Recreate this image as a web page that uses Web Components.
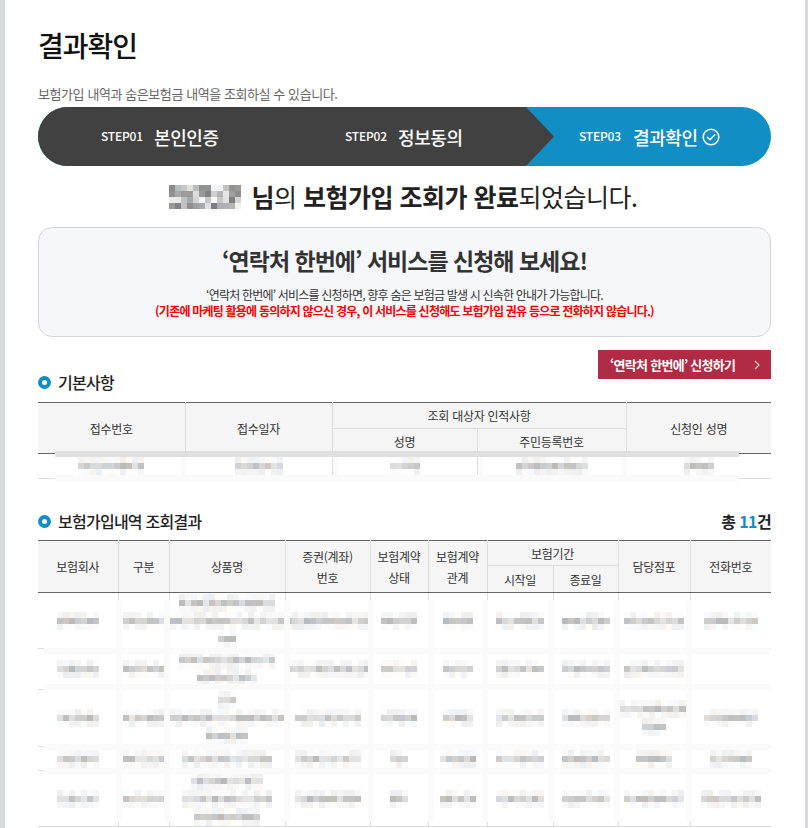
<!DOCTYPE html>
<html lang="ko">
<head>
<meta charset="utf-8">
<title>결과확인</title>
<style>
  html, body { margin: 0; height: 828px; overflow: hidden; background: #d5d9de; }
  body { font-family: "Noto Sans CJK KR", "Noto Sans", sans-serif; color: #222; }
</style>
</head>
<body>
<result-page></result-page>
<script>
// small seeded random, so the mosaic comes out the same each time
function seeded (seed) {
    let s = seed * 9301 + 49297;
    return () => {
        s = (s * 9301 + 49297) % 233280;
        return s / 233280;
    };
}

class MosaicBlock extends HTMLElement {
    connectedCallback () {
        const cols = +this.getAttribute('cols') || 6;
        const rows = +this.getAttribute('rows') || 3;
        const seed = +this.getAttribute('seed') || 1;
        const strong = this.hasAttribute('strong');
        const rnd = seeded(seed);
        let tiles = '';
        for (let y = 0; y < rows; y++) {
            for (let x = 0; x < cols; x++) {
                const mid = y === Math.floor(rows / 2);
                let v = mid ? 185 + rnd() * 45 : 238 + rnd() * 17;
                if (strong) v = 125 + rnd() * 125;
                const t = rnd() * 8 - 4;
                tiles += `<i style="background:rgb(${Math.round(v + t)},${Math.round(v)},${Math.round(Math.min(255, v - t))})"></i>`;
            }
        }
        this.attachShadow({ mode: 'open' }).innerHTML = `
            <style>
                :host { display: grid; grid-template-columns: repeat(${cols}, 6px); grid-auto-rows: 6px; width: ${cols * 6}px; margin: 0 auto; }
            </style>
            ${tiles}`;
    }
}
customElements.define('mosaic-block', MosaicBlock);

class StepBar extends HTMLElement {
    constructor () {
        super();
        this.attachShadow({ mode: 'open' }).innerHTML = `
            <style>
                :host { display: block; height: 59px; border-radius: 30px; overflow: hidden; background: #118fc5; color: #fff; }
                .wrap { display: flex; height: 100%; }
                .done {
                    width: 516px; padding-left: 63px; box-sizing: border-box;
                    display: grid; grid-template-columns: 245px 208px; align-items: center;
                    background-color: #414141;
                    background-image: radial-gradient(circle, #4b4b4b 0.5px, transparent 0.7px);
                    background-size: 6px 6px;
                    clip-path: polygon(0 0, 488px 0, 516px 50%, 488px 100%, 0 100%);
                }
                .now { flex: 1; padding-left: 25px; display: flex; align-items: center; }
                .step { display: flex; align-items: center; white-space: nowrap; }
                .step + .step { margin-left: -1px; }
                b { font-size: 12px; font-weight: 500; width: 53px; letter-spacing: -0.2px; padding-bottom: 3px; }
                span { font-size: 18px; font-weight: 500; letter-spacing: -0.4px; }
                svg { margin-left: 4px; }
            </style>
            <div class="wrap">
                <div class="done">
                    <div class="step"><b>STEP01</b><span>본인인증</span></div>
                    <div class="step"><b>STEP02</b><span>정보동의</span></div>
                </div>
                <div class="now">
                    <div class="step"><b style="width:54px">STEP03</b><span>결과확인</span>
                        <svg width="18" height="18" viewBox="0 0 18 18" fill="none" stroke="#fff" stroke-width="1.5">
                            <circle cx="9" cy="9" r="7.8"/>
                            <path d="M5.4 9.2l2.6 2.6 4.8-5" stroke-linecap="round" stroke-linejoin="round"/>
                        </svg>
                    </div>
                </div>
            </div>`;
    }
}
customElements.define('step-bar', StepBar);

class ServiceBox extends HTMLElement {
    constructor () {
        super();
        this.attachShadow({ mode: 'open' }).innerHTML = `
            <style>
                :host {
                    display: block; height: 110px; box-sizing: border-box; text-align: center;
                    border: 1px solid #d4d4d4; border-radius: 14px; background: #f6f7fb;
                    padding-top: 13px;
                }
                h2 { margin: 0; font-size: 23px; line-height: 38px; font-weight: 700; color: #333; letter-spacing: -1px; }
                p { margin: 0; font-size: 12px; line-height: 16px; letter-spacing: -0.8px; color: #333; }
                h2 + p { margin-top: 8px; }
                .warn { color: #f00; font-weight: 700; letter-spacing: -0.78px; }
            </style>
            <h2>‘연락처 한번에’ 서비스를 신청해 보세요!</h2>
            <p>‘연락처 한번에’ 서비스를 신청하면, 향후 숨은 보험금 발생 시 신속한 안내가 가능합니다.</p>
            <p class="warn">(기존에 마케팅 활용에 동의하지 않으신 경우, 이 서비스를 신청해도 보험가입 권유 등으로 전화하지 않습니다.)</p>`;
    }
}
customElements.define('service-box', ServiceBox);

class SectionHead extends HTMLElement {
    constructor () {
        super();
        this.attachShadow({ mode: 'open' }).innerHTML = `
            <style>
                :host { display: flex; align-items: center; font-size: 16px; line-height: 20px; font-weight: 500; color: #222; letter-spacing: -0.75px; }
                i { width: 13px; height: 13px; box-sizing: border-box; border: 4px solid #118fc5; border-radius: 50%; margin-right: 7px; }
            </style>
            <i></i><slot></slot>`;
    }
}
customElements.define('section-head', SectionHead);

const tableCss = `
    :host { display: block; position: relative; overflow: hidden; }
    table { width: 733px; border-collapse: collapse; table-layout: fixed; font-size: 12px; color: #333; letter-spacing: -0.3px; }
    thead th { background: #f5f5f5; font-weight: 400; line-height: 21px; border: 1px solid #dcdcdc; padding: 0; }
    thead tr:first-child th { border-top-color: #666; }
    thead th[rowspan], thead tr:last-child th { border-bottom-color: #666; }
    thead th:first-child { border-left: 0; }
    thead th:last-child { border-right: 0; }
    td { padding: 0; border-bottom: 1px solid #dedede; border-left: 1px solid #dedede; vertical-align: middle; }
    td:first-child { border-left: 0; }
    .bar { position: absolute; background: #fafafa; }
`;

function bars (list) {
    return list.map(([x, y, w, h, c]) =>
        `<div class="bar" style="left:${x}px;top:${y}px;width:${w}px;height:${h}px${c ? ';background:' + c : ''}"></div>`).join('');
}

class BasicTable extends HTMLElement {
    constructor () {
        super();
        const vals = [11, 8, 5, 12, 5];
        const cells = vals.map((c, i) => `<td><mosaic-block cols="${c}" seed="${i + 3}"></mosaic-block></td>`).join('');
        const cols = [147, 147, 145, 149, 145].map(w => `<col style="width:${w}px">`).join('');
        const xs = [143, 295, 440, 584]; // pale stripes over the column lines
        this.attachShadow({ mode: 'open' }).innerHTML = `
            <style>${tableCss}
                :host { height: 79px; }
                thead tr:first-child { height: 26px; }
                thead tr:last-child { height: 25px; }
                tbody tr { height: 25px; }
            </style>
            <table>
                <colgroup>${cols}</colgroup>
                <thead>
                    <tr><th rowspan="2">접수번호</th><th rowspan="2">접수일자</th><th colspan="2">조회 대상자 인적사항</th><th rowspan="2">신청인 성명</th></tr>
                    <tr><th>성명</th><th>주민등록번호</th></tr>
                </thead>
                <tbody><tr>${cells}</tr></tbody>
            </table>
            ${bars([[17, 49, 684, 6, '#e0e0e0'], [17, 73, 684, 6]])}
            ${bars(xs.map(x => [x, 55, 5, 18]))}`;
    }
}
customElements.define('basic-table', BasicTable);

class ResultTable extends HTMLElement {
    constructor () {
        super();
        // cells of mosaic per column, per row; an array is a cell with several lines
        const rows = [
            [56, [7, 7, [16, 19, 3], 14, 6, 5, 8, 8, 10, 9]],
            [41, [7, 7, [16, 10], 14, 6, 5, 8, 8, 10, 0]],
            [57, [7, 7, [3, 19, 7], 11, 6, 5, 8, 8, [12, 4], 9]],
            [24, [7, 7, 15, 11, 3, 6, 8, 8, 6, 7]],
            [56, [7, 7, [12, 15, 11], 11, 3, 6, 8, 8, 10, 10]],
        ];
        let seed = 20;
        const body = rows.map(([h, cells]) => `<tr style="height:${h}px">` + cells.map(c =>
            '<td>' + [].concat(c).map(n => n ? `<mosaic-block cols="${n}" seed="${seed++}"></mosaic-block>` : '').join('') + '</td>').join('') + '</tr>').join('');
        const cols = [80, 51, 116, 85, 58, 59, 66, 65, 72, 81].map(w => `<col style="width:${w}px">`).join('');
        const xs = [78, 126, 246, 330, 390, 444, 510, 576, 648];
        const ys = [108, 144, 204, 228];
        this.attachShadow({ mode: 'open' }).innerHTML = `
            <style>${tableCss}
                :host { height: 287px; }
                thead tr:first-child { height: 25px; }
                thead tr:last-child { height: 27px; }
            </style>
            <table>
                <colgroup>${cols}</colgroup>
                <thead>
                    <tr>
                        <th rowspan="2">보험회사</th><th rowspan="2">구분</th><th rowspan="2">상품명</th>
                        <th rowspan="2">증권(계좌)<br>번호</th><th rowspan="2">보험계약<br>상태</th><th rowspan="2">보험계약<br>관계</th>
                        <th colspan="2">보험기간</th><th rowspan="2">담당점포</th><th rowspan="2">전화번호</th>
                    </tr>
                    <tr><th>시작일</th><th>종료일</th></tr>
                </thead>
                <tbody>${body}</tbody>
            </table>
            ${bars(ys.map(y => [6, y, 726, 6]))}
            ${bars(xs.map(x => [x, 60, 6, 222]))}`;
    }
}
customElements.define('result-table', ResultTable);

class ResultPage extends HTMLElement {
    constructor () {
        super();
        this.attachShadow({ mode: 'open' }).innerHTML = `
            <style>
                :host { display: block; width: 800px; height: 828px; box-sizing: border-box; margin-left: 5px; padding: 0 34px 0 33px; background: #fff; overflow: hidden; }
                h1 { margin: 0; padding-top: 25px; font-size: 28px; line-height: 40px; font-weight: 500; color: #111; letter-spacing: -1px; }
                .lead { margin: 19px 0 0; font-size: 13px; line-height: 20px; color: #666; letter-spacing: -0.42px; }
                step-bar { margin-top: 3px; }
                .done-msg { margin: 14px 0 0; padding-right: 2px; height: 33px; display: flex; justify-content: center; align-items: center; font-size: 25px; line-height: 33px; font-weight: 400; color: #222; letter-spacing: -0.5px; white-space: pre; }
                .done-msg .name { flex: none; width: 72px; margin-right: 10px; }
                .done-msg b { font-weight: 700; }
                service-box { margin-top: 14px; }
                .basic-head { display: flex; justify-content: space-between; height: 52px; margin-top: 13px; }
                .basic-head section-head { align-self: flex-end; height: 20px; margin-bottom: 10px; }
                .apply {
                    width: 173px; height: 29px; box-sizing: border-box; padding: 0 11px 0 12px;
                    display: flex; align-items: center; justify-content: space-between;
                    background: #b12b45; color: #fff; font-size: 13px; font-weight: 700; letter-spacing: -0.72px;
                }
                .list-head { display: flex; justify-content: space-between; align-items: center; height: 20px; margin: 30px 0 9px; }
                .total { font-size: 16px; font-weight: 700; color: #222; letter-spacing: -0.6px; }
                .total em { font-style: normal; color: #118fc5; }
            </style>
            <h1>결과확인</h1>
            <p class="lead">보험가입 내역과 숨은보험금 내역을 조회하실 수 있습니다.</p>
            <step-bar></step-bar>
            <div class="done-msg"><div class="name"><mosaic-block cols="12" rows="4" seed="7" strong></mosaic-block></div><b>님</b><span>의 </span><b>보험가입 조회가 완료</b><span>되었습니다.</span></div>
            <service-box></service-box>
            <div class="basic-head">
                <section-head>기본사항</section-head>
                <div class="apply"><span>‘연락처 한번에’ 신청하기</span>
                    <svg width="6" height="10" viewBox="0 0 6 10" fill="none" stroke="#f0d5da" stroke-width="1.2"><path d="M1 1l4 4-4 4"/></svg>
                </div>
            </div>
            <basic-table></basic-table>
            <div class="list-head">
                <section-head>보험가입내역 조회결과</section-head>
                <div class="total">총 <em>11</em>건</div>
            </div>
            <result-table></result-table>`;
    }
}
customElements.define('result-page', ResultPage);
</script>
</body>
</html>
